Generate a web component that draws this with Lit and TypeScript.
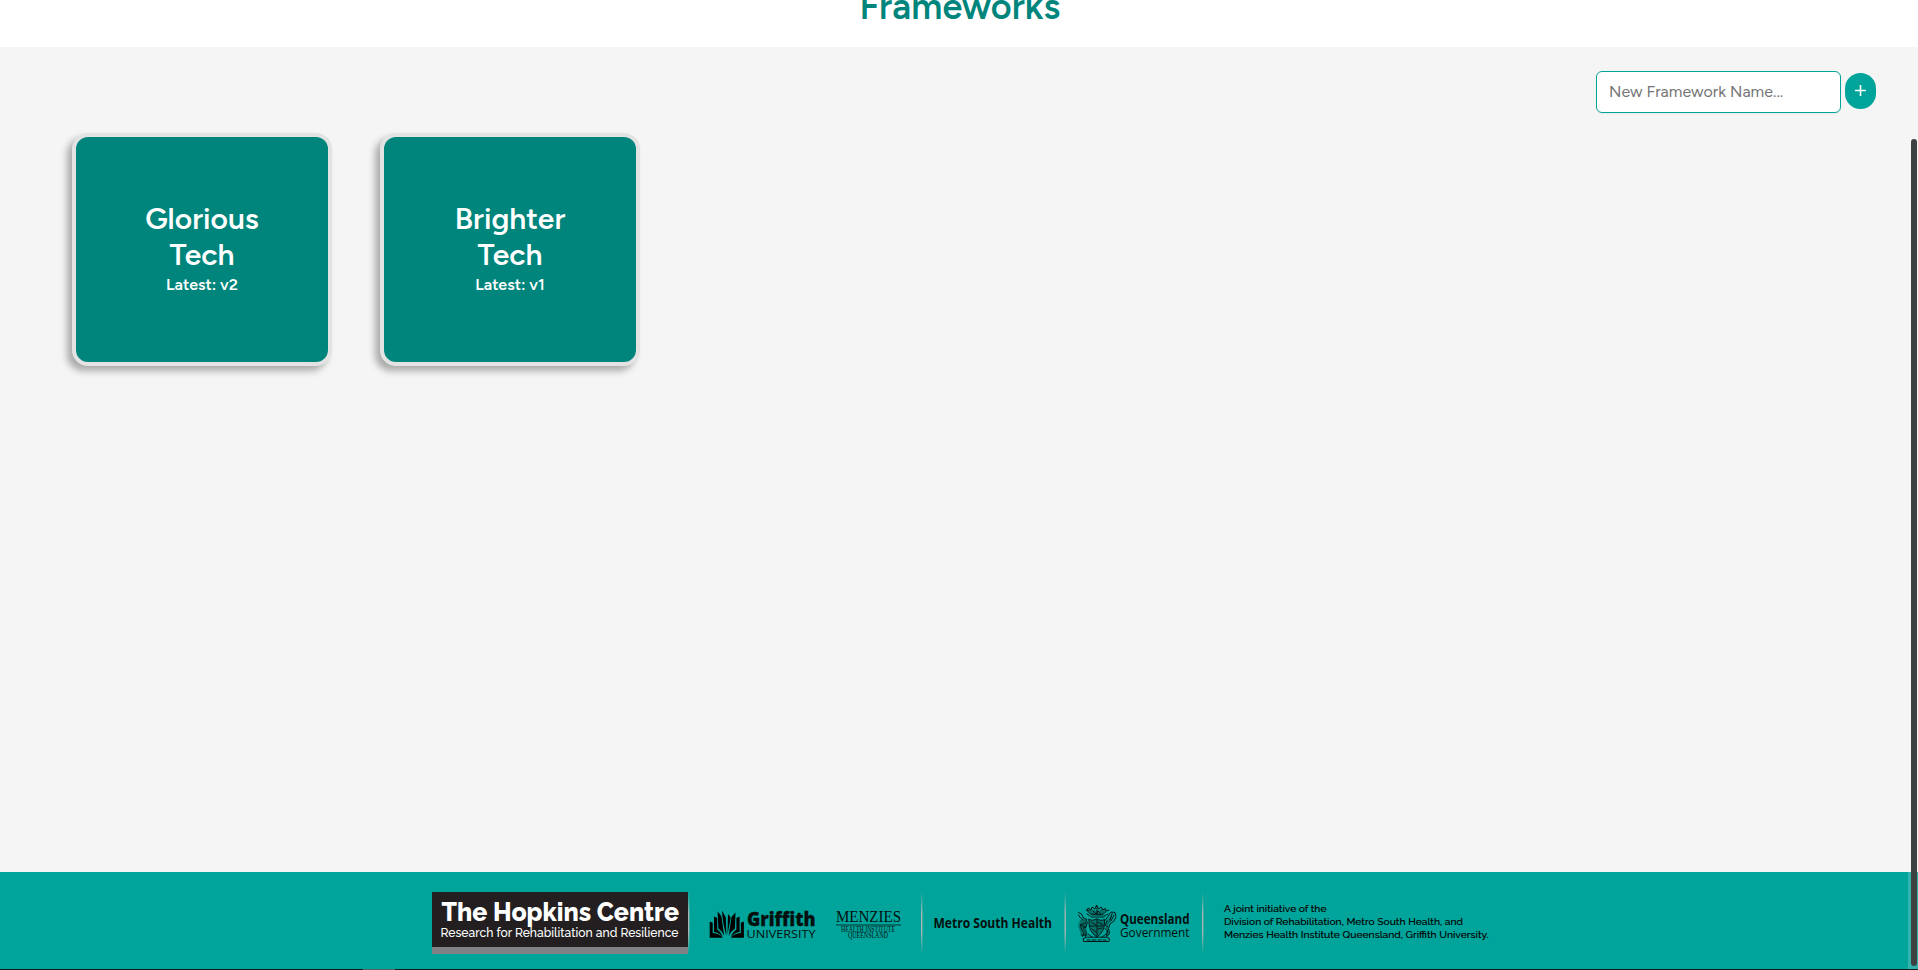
import { LitElement, html, css, svg } from "lit";
import { customElement, property } from "lit/decorators.js";

@customElement("framework-card")
class FrameworkCard extends LitElement {
  @property() name = "";
  @property() version = "";
  static styles = css`
    :host { display: block; }
    .card {
      box-sizing: border-box; width: 260px; height: 233px; border: 4px solid #e3e3e3;
      border-radius: 16px; background: #00857c; color: #fff; text-align: center;
      box-shadow: -5px 5px 7px rgba(0, 0, 0, 0.3);
      display: flex; flex-direction: column; align-items: center; justify-content: center;
      padding: 0 50px 1px;
    }
    .name { font-size: 30px; line-height: 36px; font-weight: 600; }
    .version { font-size: 16px; line-height: 24px; font-weight: 600; white-space: nowrap; }
  `;
  render() {
    return html`<div class="card">
      <div class="name">${this.name}</div>
      <div class="version">Latest: ${this.version}</div>
    </div>`;
  }
}

const divider = (x: number) => svg`<rect x=${x} y="892" width="1.4" height="62" fill="url(#fade)"/>`;

@customElement("app-root")
class AppRoot extends LitElement {
  static styles = css`
    * { box-sizing: border-box; }
    :host { display: block; height: 970px; overflow: hidden; position: relative; background: #f5f5f5; font-family: Figtree, Inter, "Open Sans", sans-serif; }
    svg { display: block; }
    .page { display: flex; flex-direction: column; height: 970px; }
    header { height: 47px; background: #fff; flex: none; display: flex; flex-direction: column; justify-content: flex-end; align-items: center; }
    h1 { margin: 0 0 20px; padding-left: 2px; font-size: 36px; line-height: 40px; font-weight: 600; letter-spacing: 0.1px; color: #00857c; }
    .tools { display: flex; justify-content: flex-end; align-items: flex-start; gap: 4px; padding: 24px 42px 0 0; height: 86px; flex: none; }
    .field { width: 245px; height: 42px; padding: 0 12px 2px; border: 1px solid #00a49a; border-radius: 6px; background: #fff; box-shadow: 0 1px 2px rgba(0, 0, 0, 0.05); font: 400 16px/24px Figtree, Inter, sans-serif; letter-spacing: 0.04px; outline: 0; }
    .field::placeholder { color: #757575; }
    .add { margin-top: 2px; width: 31px; height: 36px; border: 0; padding: 0; border-radius: 16px; background: #00a49a; }
    .cards { display: flex; gap: 48px; padding-left: 72px; flex: 1; }
    footer { height: 97px; background: #00a49a; flex: none; }
    .edge { height: 1px; background: #10201f; flex: none; padding-left: 363px; }
    .edge i { display: block; width: 32px; height: 1px; background: #596363; }
    .track { position: absolute; right: 0; top: 872px; width: 10px; height: 97px; background: #33b3ab; }
    .thumb { position: absolute; right: 1px; top: 139px; width: 6px; height: 827px; border-radius: 3px; background: #3d4142; }
  `;
  render() {
    return html`
      <div class="page">
        <header><h1>Frameworks</h1></header>
        <div class="tools">
          <input class="field" placeholder="New Framework Name..." />
          <button class="add" aria-label="Add">
            <svg width="31" height="36" viewBox="0 0 31 36"><path d="M10 17.500h11M15.500 12v11" stroke="#fff" stroke-width="1.6"/></svg>
          </button>
        </div>
        <main class="cards">
          <framework-card name="Glorious Tech" version="v2"></framework-card>
          <framework-card name="Brighter Tech" version="v1"></framework-card>
        </main>
        <footer>${this.logos()}</footer>
        <div class="edge"><i></i></div>
      </div>
      <div class="track"></div>
      <div class="thumb"></div>
    `;
  }

  logos() {
    return html`<svg width="1918" height="97" viewBox="0 872 1918 97" fill="#04100f">
      <defs>
        <linearGradient id="fade" x1="0" y1="0" x2="0" y2="1">
          <stop offset="0" stop-color="#a9b5b4" stop-opacity="0"/><stop offset=".35" stop-color="#a9b5b4"/>
          <stop offset=".65" stop-color="#a9b5b4"/><stop offset="1" stop-color="#a9b5b4" stop-opacity="0"/>
        </linearGradient>
      </defs>
      <rect x="432" y="892" width="256" height="55" fill="#231f20"/>
      <rect x="432" y="947" width="256" height="7" fill="#808184"/>
      ${divider(688)}
      <g fill="#fff" font-family="Raleway, Lato, sans-serif">
        <text x="441.500" y="920.700" font-size="25" font-weight="800" textLength="237.500" lengthAdjust="spacingAndGlyphs">The Hopkins Centre</text>
        <text x="440.500" y="937.300" font-size="13" font-weight="500" textLength="238" lengthAdjust="spacingAndGlyphs">Research for Rehabilitation and Resilience</text>
      </g>
      <g fill="#000">
        <path d="M709.700 921.500l3 1.200v10.300c4.500.3 8 2 10 4.700h-13z"/>
        <path d="M714 916.500l3.200 1.500v11.500c2.600 1.800 4.500 4.500 5.600 7.500-2.300-2.700-5-4.500-8.800-5z"/>
        <path d="M717.600 911.500l3.700 4.500 2.900 20c-1.500-3.500-3.400-5.800-5.800-7.500z"/>
        <path d="M743.900 921.500l-3 1.200v10.300c-4.500.3-8 2-10 4.700h13z"/>
        <path d="M739.600 916.500l-3.200 1.500v11.500c-2.600 1.800-4.500 4.500-5.600 7.500 2.300-2.700 5-4.500 8.800-5z"/>
        <path d="M735.500 912.500l-4 4.500-2.800 19c1.500-3.500 3.800-5.800 6.200-7.500z"/>
        <path d="M722 910.500l3.800 7 .6 18.500c-2-7-3.900-15.500-4.400-25.500zM728 914l2.700 3.500-3.200 17z"/>
      </g>
      <text x="747" y="926.200" font-size="19.500" font-weight="800" font-family="Open Sans, sans-serif" textLength="68.500" lengthAdjust="spacingAndGlyphs" stroke="#04100f" stroke-width=".3">Griffith</text>
      <text x="746.500" y="937.700" font-size="11.600" font-family="Open Sans, sans-serif" textLength="69" lengthAdjust="spacingAndGlyphs">UNIVERSITY</text>
      <g font-family="Liberation Serif, serif">
        <text x="836" y="921.700" font-size="16.500" textLength="65" lengthAdjust="spacingAndGlyphs">MENZIES</text>
        <rect x="836" y="924.500" width="65" height="1" opacity=".75"/>
        <text x="841" y="931.900" font-size="7.400" textLength="54" lengthAdjust="spacingAndGlyphs">HEALTH INSTITUTE</text>
        <text x="848" y="938" font-size="7.400" textLength="40" lengthAdjust="spacingAndGlyphs">QUEENSLAND</text>
      </g>
      ${divider(921)}
      <text x="933.500" y="927.800" font-size="14.500" font-weight="700" font-family="Open Sans, sans-serif" textLength="118.500" lengthAdjust="spacingAndGlyphs">Metro South Health</text>
      ${divider(1064.500)}
      <path d="M1089 919.500c3 1.500 5 .5 7.500-.5 3 1 5 2 8 .5.500 7-1 13-7.700 17.500-6.500-4.500-8.300-10.500-7.800-17.500zM1080 920l6-1 1 5-1 12h-5l-1-5-2-5zM1106 921l4-4 3-6-2 10-3 4 1 9-3 2zM1088 908l9 3 9-3-3 8h-12z" opacity=".35"/>
      <g fill="none" stroke="#061a19" stroke-width="1" stroke-linecap="round" stroke-linejoin="round">
        <path d="M1083.500 938.500l3-1.300h20l3 1.300-.5 3h-25zM1087 940h3m2 0h4m2 0h3m2 0h3" />
        <path d="M1089 919.500c3 1.500 5 .5 7.500-.5 3 1 5 2 8 .5.500 7-1 13-7.700 17.500-6.500-4.500-8.300-10.500-7.800-17.500zM1089.500 926h14.500M1097 919v17M1091 922l5 3m2-3l5 3M1092 929l4 3m2-3l4-1" />
        <path d="M1078.500 912.500l3 1.500 1.500 3.500 4 2-2 4-4.500 1 1 5 2.500 3-1.500 4M1078.500 915l2 3 3 2M1087.500 922l-1.500 5-3 1 3.500 4-1 4.500M1081 925l4 2M1082 935h5M1088 934l4 3" />
        <path d="M1105 920.500l3-4 3-4.500 4 .5 1 4-2 4.500-4 3-1.500 4.500 1 5-3 3.500M1112 914l-2 6m4-5l-3 6M1104.500 928l3 3-1 5M1107 921l-2 4 3 2M1102 937l4-3" />
        <path d="M1091 914c-3-1-4-3-3-6l3 2 1-3 3 2 1.500-4 2 4 3-2 1 3 3-1.500c1 3-.5 5-3.500 6zM1091 917h13M1093 911l3 3 2-3 3 3M1089 911l-3-1m20 1l3-1M1097 906v8M1087 914l3 2m14 0l4-2" />
      </g>
      <text x="1120" y="923.700" font-size="13.800" font-weight="700" font-family="Open Sans, sans-serif" textLength="69.500" lengthAdjust="spacingAndGlyphs">Queensland</text>
      <text x="1120" y="937.300" font-size="13.300" font-family="Open Sans, sans-serif" textLength="69.500" lengthAdjust="spacingAndGlyphs">Government</text>
      ${divider(1202)}
      <g font-family="Raleway, Lato, sans-serif" font-size="9.800" font-weight="500" fill="#000" stroke="#000" stroke-width=".12">
        <text x="1224" y="912" textLength="102.500" lengthAdjust="spacingAndGlyphs">A joint initiative of the</text>
        <text x="1224" y="925" textLength="239" lengthAdjust="spacingAndGlyphs">Division of Rehabilitation, Metro South Health, and</text>
        <text x="1224" y="937.700" textLength="264.500" lengthAdjust="spacingAndGlyphs">Menzies Health Institute Queensland, Griffith University.</text>
      </g>
    </svg>`;
  }
}
